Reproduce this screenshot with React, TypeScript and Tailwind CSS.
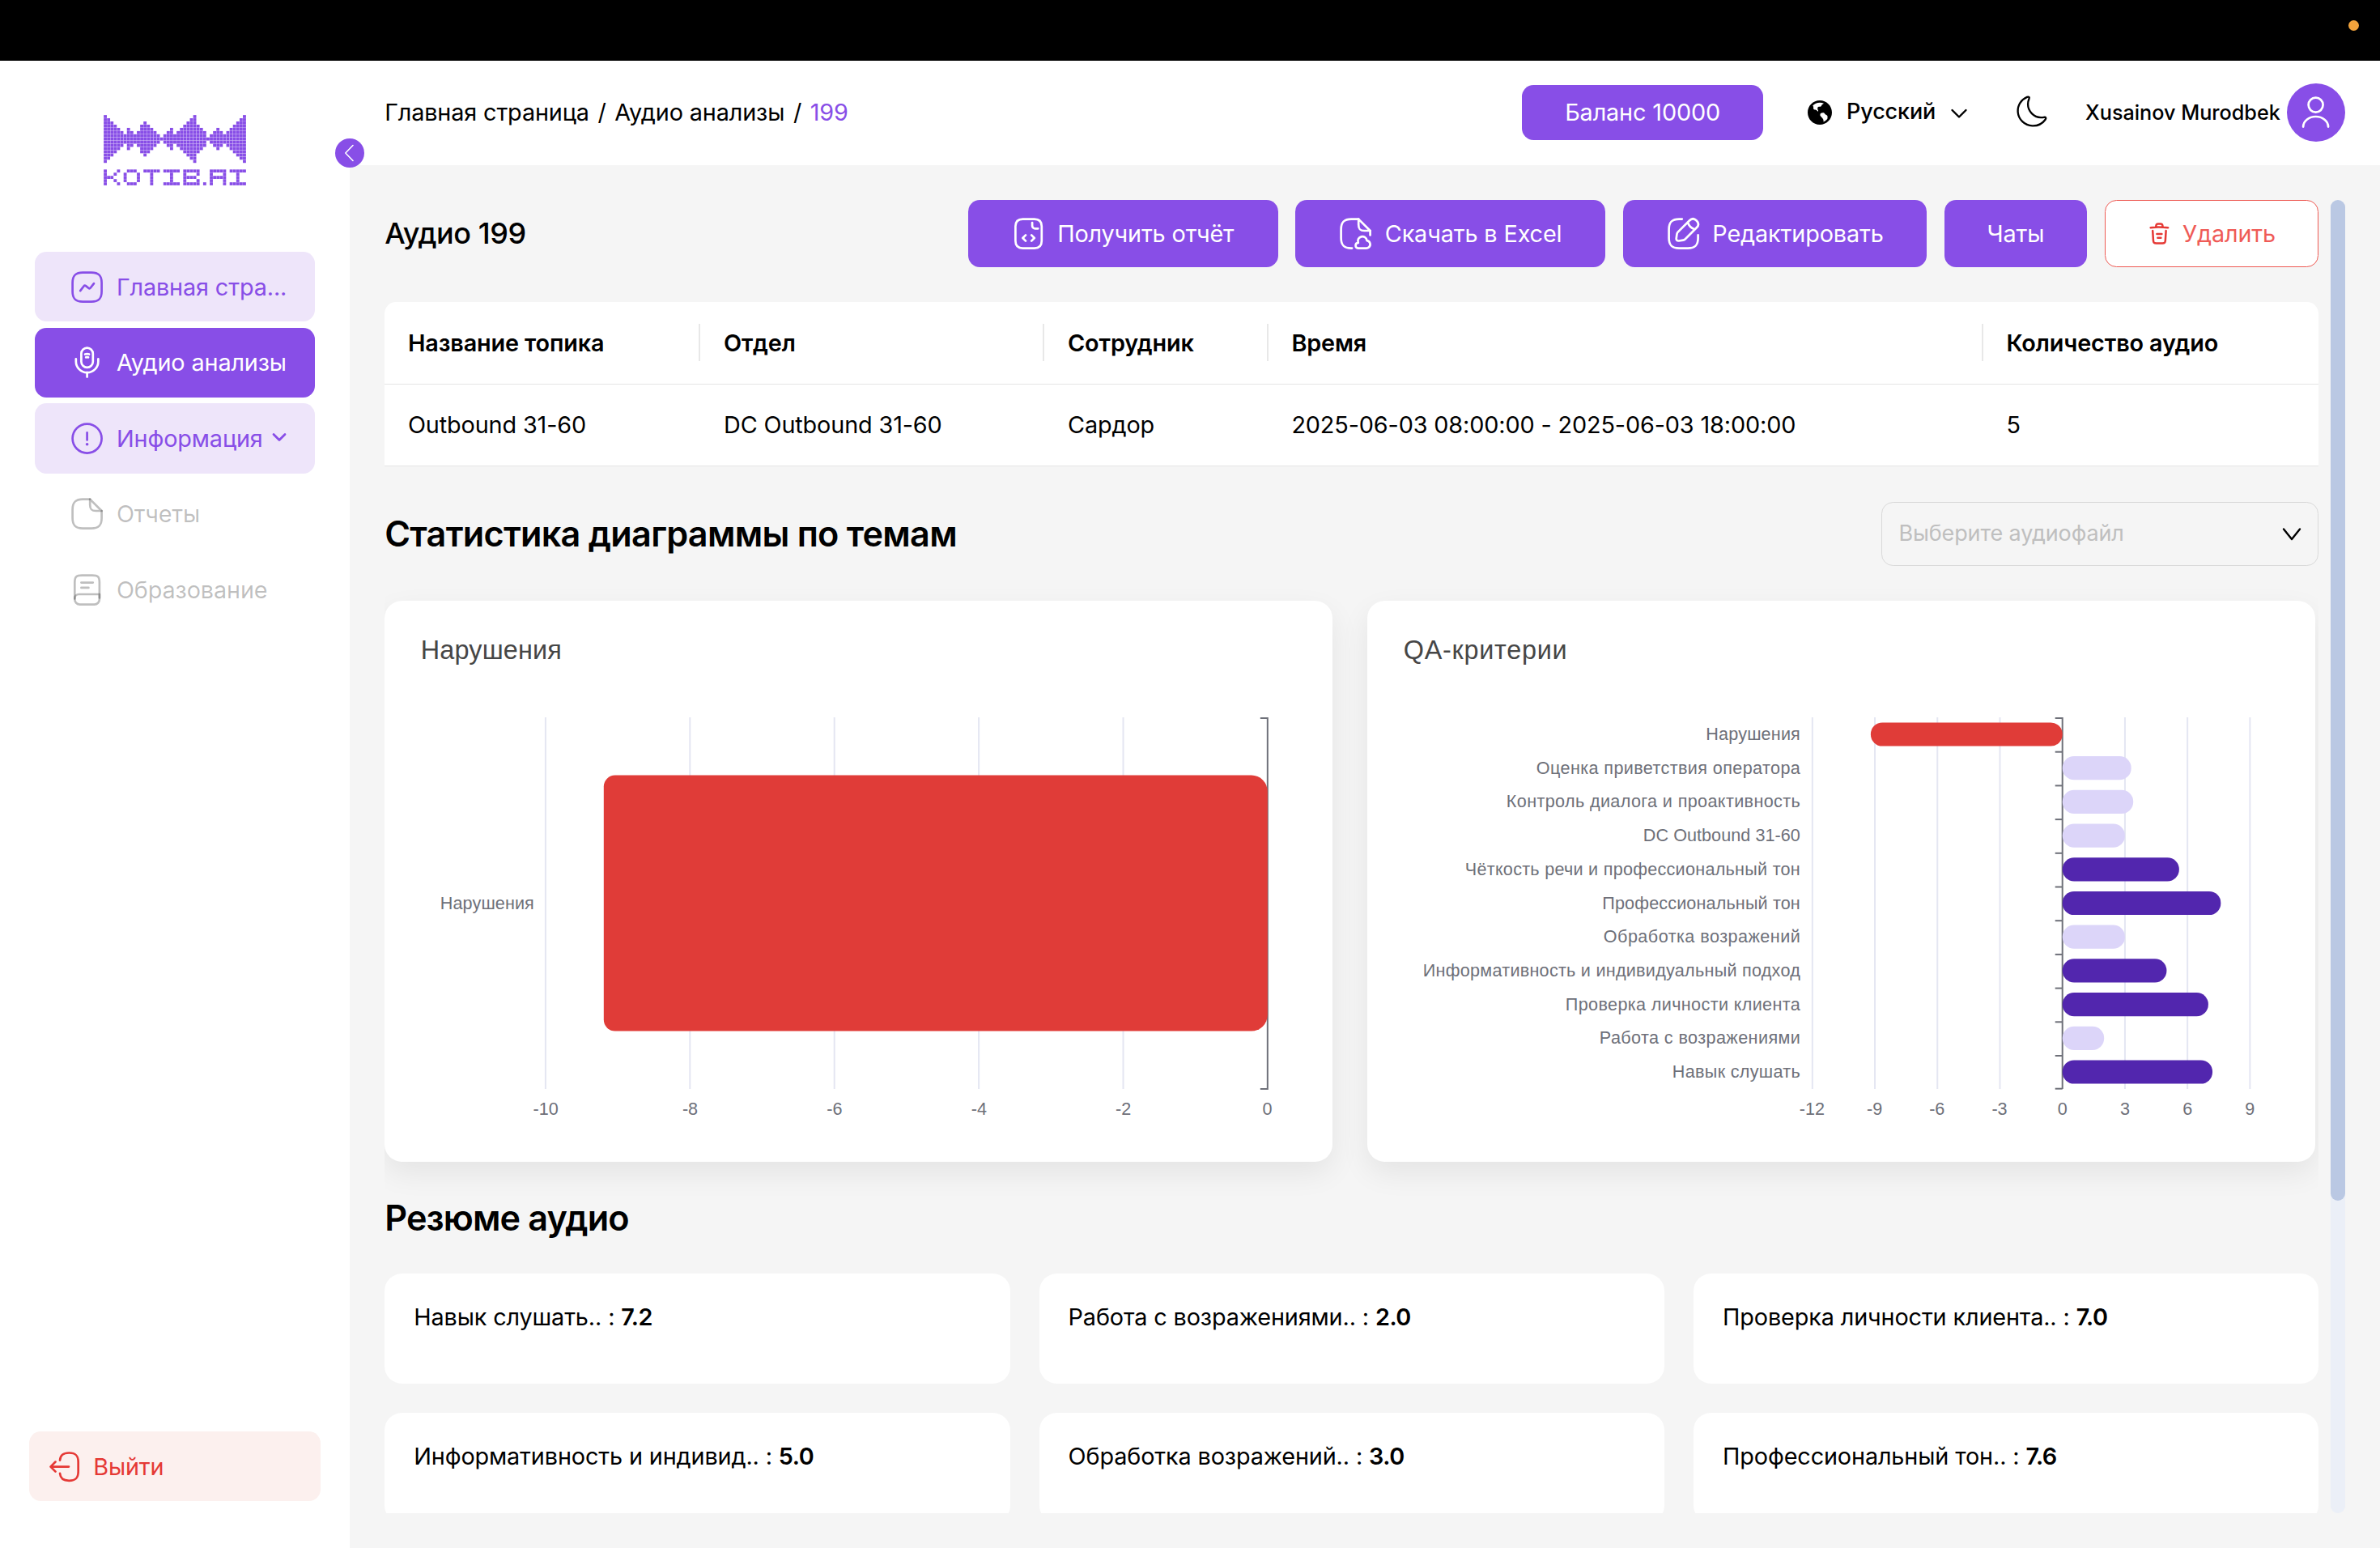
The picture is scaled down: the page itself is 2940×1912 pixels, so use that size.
import React from 'react';
import { RiEarthFill } from 'react-icons/ri';

function Icon({ children, className = 'size-6', width = 1.5 }: { children: React.ReactNode; className?: string; width?: number }) {
  return (
    <svg viewBox="0 0 24 24" fill="none" stroke="currentColor" strokeWidth={width} strokeLinecap="round" strokeLinejoin="round" className={`${className} shrink-0`}>
      {children}
    </svg>
  );
}

const waveHeights = [
  7, 6, 5, 4, 3, 2, 1, 3, 2, 1, 2, 4, 5, 4, 3, 2, 1, 0, 1, 2, 3, 1, 2, 3, 4, 5, 6, 7, 4, 3, 2, 0, 1, 2, 3, 2, 1, 2, 3, 4, 5, 6, 7,
];
const wordmark = [
  'X...X..XXX..XXXXX.XXXXX.XXXXX...XXXXX.XXXXX',
  'X..X..X...X...X.....X...X...X...X...X...X..',
  'XXX...X...X...X.....X...XXXX....XXXXX...X..',
  'X..X..X...X...X.....X...X...X...X...X...X..',
  'X...X..XXX....X...XXXXX.XXXXX.X.X...X.XXXXX',
];

function Logo() {
  const cells: [number, number][] = [];
  waveHeights.forEach((h, x) => {
    for (let y = 7 - h; y <= 7 + h; y++) cells.push([x, y]);
  });
  wordmark.forEach((row, y) => {
    row.split('').forEach((c, x) => {
      if (c === 'X') cells.push([x, y + 17]);
    });
  });
  return (
    <svg viewBox="0 0 43 22" preserveAspectRatio="none" className="h-[87px] w-[176px]" fill="#884ee7">
      {cells.map(([x, y]) => (
        <rect key={`${x}-${y}`} x={x + 0.03} y={y + 0.03} width={0.94} height={0.94} />
      ))}
    </svg>
  );
}

const nav = [
  {
    label: 'Главная стра...',
    style: 'bg-[#eee5fa] text-[#884ee7]',
    icon: (
      <>
        <path d="M9 22h6c5 0 7-2 7-7V9c0-5-2-7-7-7H9C4 2 2 4 2 9v6c0 5 2 7 7 7Z" />
        <path d="m7.33 14.49 2.38-3.09c.34-.44.97-.52 1.41-.18l1.83 1.44c.44.34 1.07.26 1.41-.17l2.31-2.98" />
      </>
    ),
  },
  {
    label: 'Аудио анализы',
    style: 'bg-[#884ee7] text-white',
    icon: (
      <>
        <path d="M12 15.5c2.21 0 4-1.79 4-4V6c0-2.21-1.79-4-4-4S8 3.79 8 6v5.5c0 2.21 1.79 4 4 4Z" />
        <path d="M4.35 9.65v1.7C4.35 15.57 7.78 19 12 19s7.65-3.43 7.65-7.65v-1.7" />
        <path d="M10.61 6.43a4.1 4.1 0 0 1 2.78 0M11.2 8.55c.53-.15 1.08-.15 1.61 0M12 19v3" />
      </>
    ),
  },
  {
    label: 'Информация',
    style: 'bg-[#eee5fa] text-[#884ee7]',
    chevron: true,
    icon: (
      <>
        <path d="M12 22c5.5 0 10-4.5 10-10S17.5 2 12 2 2 6.5 2 12s4.5 10 10 10Z" />
        <path d="M12 8v5" />
        <path d="M11.995 16h.009" strokeWidth={2} />
      </>
    ),
  },
  {
    label: 'Отчеты',
    style: 'text-black/25',
    icon: (
      <>
        <path d="M22 10v5c0 5-2 7-7 7H9c-5 0-7-2-7-7V9c0-5 2-7 7-7h5" />
        <path d="M22 10h-4c-3 0-4-1-4-4V2l8 8Z" />
      </>
    ),
  },
  {
    label: 'Образование',
    style: 'text-black/25',
    icon: (
      <>
        <path d="M3.5 18V7c0-4 1-5 5-5h7c4 0 5 1 5 5v10c0 .14 0 .28-.01.42" />
        <path d="M6.35 15H20.5v3.5c0 1.93-1.57 3.5-3.5 3.5H7c-1.93 0-3.5-1.57-3.5-3.5v-.65C3.5 16.28 4.78 15 6.35 15Z" />
        <path d="M8 7h8M8 10.5h5" />
      </>
    ),
  },
];

function Sidebar() {
  return (
    <aside className="relative flex w-60 shrink-0 flex-col bg-white">
      <div className="flex h-[236.1px] justify-center pt-[67px]">
        <Logo />
      </div>
      <nav className="flex flex-col gap-1 px-6">
        {nav.map((item) => (
          <div key={item.label} className={`flex h-12 items-center gap-2 rounded-lg pl-6 ${item.style}`}>
            <Icon>{item.icon}</Icon>
            <span className="whitespace-nowrap">{item.label}</span>
            {item.chevron && (
              <Icon className="-ml-[6px] size-[24px]" width={2.8}>
                <path d="m5 7.5 7 7 7-7" />
              </Icon>
            )}
          </div>
        ))}
      </nav>
      <div className="mx-5 mt-auto mb-[57.6px] flex h-12 items-center gap-2 rounded-lg bg-[#fcf0ee] pl-3 text-[#e53935]">
        <Icon>
          <path d="M8.9 7.56c.31-3.6 2.16-5.07 6.21-5.07h.13c4.47 0 6.26 1.79 6.26 6.27v6.52c0 4.48-1.79 6.27-6.26 6.27h-.13c-4.02 0-5.87-1.45-6.2-4.99" />
          <path d="M15 12H3.62M5.85 8.65 2.5 12l3.35 3.35" />
        </Icon>
        <span>Выйти</span>
      </div>
      <div className="absolute top-[96px] -right-[18px] z-10 flex size-5 items-center justify-center rounded-full bg-[#884ee7] text-white">
        <Icon className="size-[24px]" width={1.6}>
          <path d="M16 2.5 6.8 12l9.2 9.5" />
        </Icon>
      </div>
    </aside>
  );
}

function Header() {
  return (
    <header className="flex h-[129px] items-center bg-white px-6 pb-[1px]">
      <div className="flex gap-[10.6px]">
        <span>Главная страница</span>
        <span>/</span>
        <span>Аудио анализы</span>
        <span>/</span>
        <span className="text-[#884ee7]">199</span>
      </div>
      <div className="ml-auto flex h-[68px] w-[298px] items-center justify-center rounded-lg bg-[#884ee7] text-white">Баланс 10000</div>
      <div className="ml-[52px] flex items-center pb-[1px]">
        <RiEarthFill className="size-[36px]" />
        <span className="ml-[15px] w-[111px] text-[27px] font-medium">Русский</span>
        <Icon className="mt-[2px] ml-[16px] size-[24px]" width={2.4}>
          <path d="m3.5 8 8.5 8.5L20.5 8" />
        </Icon>
      </div>
      <Icon className="mb-[3px] ml-[57px] size-[43px]" width={1.3}>
        <path d="M2.03 12.42c.36 5.15 4.73 9.34 9.96 9.57 3.69.16 6.99-1.56 8.97-4.27.82-1.11.38-1.85-.99-1.6-.67.12-1.36.17-2.08.14C13 16.06 9 11.97 8.98 7.14c-.01-1.3.26-2.53.75-3.65.54-1.24-.11-1.83-1.36-1.3C4.41 3.86 1.7 7.85 2.03 12.42Z" />
      </Icon>
      <span className="ml-[44px] text-sm font-medium tracking-normal">Xusainov Murodbek</span>
      <div className="ml-[8px] flex size-10 items-center justify-center rounded-full bg-[#884ee7] text-white">
        <Icon>
          <path d="M12 12c2.76 0 5-2.24 5-5s-2.24-5-5-5-5 2.24-5 5 2.24 5 5 5ZM20.59 22c0-3.87-3.85-7-8.59-7s-8.59 3.13-8.59 7" />
        </Icon>
      </div>
    </header>
  );
}

function Toolbar() {
  return (
    <div className="flex items-center gap-3">
      <h1 className="mr-auto text-xl font-medium tracking-[-0.45px]">Аудио 199</h1>
      <div className="flex h-[82.8px] w-[383px] items-center gap-2 rounded-lg bg-[#884ee7] pl-[53px] text-white">
        <Icon>
          <path d="M21 7v10c0 3-1.5 5-5 5H8c-3.5 0-5-2-5-5V7c0-3 1.5-5 5-5h8c3.5 0 5 2 5 5Z" />
          <path d="M14.5 4.5v2c0 1.1.9 2 2 2h2M10 13l-2 2 2 2M14 13l2 2-2 2" />
        </Icon>
        <span>Получить отчёт</span>
      </div>
      <div className="flex h-[82.8px] w-[383px] items-center gap-2 rounded-lg bg-[#884ee7] pl-[53px] text-white">
        <Icon>
          <path d="M9.5 22H9c-5 0-7-2-7-7V9c0-5 2-7 7-7h5M22 10v3" />
          <path d="M22 10h-4c-3 0-4-1-4-4V2l8 8Z" />
          <path d="M13.76 18.28c-2.35.17-2.35 3.57 0 3.74h5.56c.67 0 1.33-.25 1.82-.7 1.65-1.44.77-4.32-1.4-4.59-.78-4.69-7.56-2.91-5.95 1.56" />
        </Icon>
        <span>Скачать в Excel</span>
      </div>
      <div className="flex h-[82.8px] w-[375.3px] items-center gap-2 rounded-lg bg-[#884ee7] pl-[53px] text-white">
        <Icon>
          <path d="M11 2H9C4 2 2 4 2 9v6c0 5 2 7 7 7h6c5 0 7-2 7-7v-2" />
          <path d="M16.04 3.02 8.16 10.9c-.3.3-.6.89-.66 1.32l-.43 3.01c-.16 1.09.61 1.85 1.7 1.7l3.01-.43c.42-.06 1.01-.36 1.32-.66l7.88-7.88c1.36-1.36 2-2.94 0-4.94-2-2-3.58-1.36-4.94 0ZM14.91 4.15a7.144 7.144 0 0 0 4.94 4.94" />
        </Icon>
        <span>Редактировать</span>
      </div>
      <div className="flex h-[82.8px] w-[176.6px] items-center justify-center rounded-lg bg-[#884ee7] text-white">Чаты</div>
      <div className="flex h-[82.8px] w-[264.6px] items-center gap-2 rounded-lg border border-[#ee5a53] bg-white pl-[52px] text-[#ef5b57]">
        <Icon className="size-4 text-[#e53935]" width={2.1}>
          <path d="M21 5.98c-3.33-.33-6.68-.5-10.02-.5-1.98 0-3.96.1-5.94.3L3 5.98M8.5 4.97l.22-1.31C8.88 2.71 9 2 10.69 2h2.62c1.69 0 1.82.75 1.97 1.67l.22 1.3M18.85 9.14l-.65 10.07C18.09 20.78 18 22 15.21 22H8.79C6 22 5.91 20.78 5.8 19.21L5.15 9.14M10.33 16.5h3.33M9.5 12.5h5" />
        </Icon>
        <span>Удалить</span>
      </div>
    </div>
  );
}

const columns = [
  { title: 'Название топика', value: 'Outbound 31-60' },
  { title: 'Отдел', value: 'DC Outbound 31-60' },
  { title: 'Сотрудник', value: 'Сардор' },
  { title: 'Время', value: '2025-06-03 08:00:00 - 2025-06-03 18:00:00' },
  { title: 'Количество аудио', value: '5' },
];

function TopicTable() {
  return (
    <div className="mt-6 overflow-hidden rounded-t-lg bg-white">
      <div className="grid h-[101.4px] grid-cols-[390px_425px_276.4px_883px_1fr] items-center border-b border-[#e5e5e5] font-semibold">
        {columns.map((c, i) => (
          <div key={c.title} className={`flex h-[46px] items-center pl-4 ${i < 4 ? 'border-r-2 border-[#e8e8e8]' : ''}`}>
            {c.title}
          </div>
        ))}
      </div>
      <div className="grid h-[101.4px] grid-cols-[390px_425px_276.4px_883px_1fr] items-center border-b border-[#e5e5e5]">
        {columns.map((c) => (
          <div key={c.title} className="pl-4">
            {c.value}
          </div>
        ))}
      </div>
    </div>
  );
}

const chartFont = "'Liberation Sans', Arial, sans-serif";

function ViolationsChart() {
  const x0 = 1565.6;
  const step = 178.4;
  return (
    <svg viewBox="475.2 742 1171 693" className="h-[693px] w-full tracking-normal" fontFamily={chartFont}>
      <text x={520} y={814} fontSize={32.4} fill="#464646" textLength={174}>
        Нарушения
      </text>
      {[-10, -8, -6, -4, -2].map((v) => (
        <rect key={v} x={x0 + (v / 2) * step - 0.5} y={886} width={2} height={459} fill="#e4e6f2" />
      ))}
      <path d="M1557 887h9v458h-9" fill="none" stroke="#6e7079" strokeWidth={2} />
      <path d="M760 957.6H1546a20 20 0 0 1 20 20V1253.6a20 20 0 0 1-20 20H760a14 14 0 0 1-14-14V971.6a14 14 0 0 1 14-14Z" fill="#e03c38" />
      <text x={660} y={1122.5} fontSize={21.6} fill="#6e7079" textAnchor="end" textLength={116}>
        Нарушения
      </text>
      {[-10, -8, -6, -4, -2, 0].map((v) => (
        <text key={v} x={x0 + (v / 2) * step + (v < 0 ? 0.7 : 0)} y={1377.4} fontSize={21.6} fill="#6e7079" textAnchor="middle">
          {v}
        </text>
      ))}
    </svg>
  );
}

const red = '#e03c38';
const lilac = '#dcd5f9';
const violet = '#5226ae';

const criteria = [
  { label: 'Нарушения', value: -9.2, color: red, width: 116.5 },
  { label: 'Оценка приветствия оператора', value: 3.3, color: lilac, width: 326 },
  { label: 'Контроль диалога и проактивность', value: 3.4, color: lilac, width: 363 },
  { label: 'DC Outbound 31-60', value: 3, color: lilac, width: 194 },
  { label: 'Чёткость речи и профессиональный тон', value: 5.6, color: violet, width: 414 },
  { label: 'Профессиональный тон', value: 7.6, color: violet, width: 244.5 },
  { label: 'Обработка возражений', value: 3, color: lilac, width: 243 },
  { label: 'Информативность и индивидуальный подход', value: 5, color: violet, width: 466 },
  { label: 'Проверка личности клиента', value: 7, color: violet, width: 290 },
  { label: 'Работа с возражениями', value: 2, color: lilac, width: 248 },
  { label: 'Навык слушать', value: 7.2, color: violet, width: 158 },
];

function CriteriaChart() {
  const x0 = 2547.5;
  const unit = 25.74;
  const band = 41.7;
  return (
    <svg viewBox="1688.8 742 1171 693" className="h-[693px] w-full tracking-normal" fontFamily={chartFont}>
      <text x={1733.5} y={814} fontSize={32.4} fill="#464646" textLength={202}>
        QA-критерии
      </text>
      {[-12, -9, -6, -3, 3, 6, 9].map((v) => (
        <rect key={v} x={x0 + v * unit - 1} y={886} width={2} height={459} fill="#e4e6f2" />
      ))}
      <rect x={x0 - 1} y={886} width={2} height={459} fill="#6e7079" />
      {Array.from({ length: 12 }, (_, i) => (
        <rect key={i} x={x0 - 9} y={886 + i * band - (i === 11 ? 1 : 0)} width={9} height={2} fill="#6e7079" />
      ))}
      {criteria.map(({ label, value, color, width }, i) => (
        <g key={label}>
          <rect x={value < 0 ? x0 + value * unit : x0} y={886 + i * band + 6.4} width={Math.abs(value) * unit} height={29.2} rx={14.4} fill={color} />
          <text x={2223.6} y={886 + (i + 0.5) * band + 7.2} fontSize={21.6} fill="#6e7079" textAnchor="end" textLength={width}>
            {label}
          </text>
        </g>
      ))}
      {[-12, -9, -6, -3, 0, 3, 6, 9].map((v) => (
        <text key={v} x={x0 + v * unit - (v < 0 ? 0.5 : 0)} y={1377.4} fontSize={21.6} fill="#6e7079" textAnchor="middle">
          {v}
        </text>
      ))}
    </svg>
  );
}

const summary = [
  ['Навык слушать..', '7.2'],
  ['Работа с возражениями..', '2.0'],
  ['Проверка личности клиента..', '7.0'],
  ['Информативность и индивид..', '5.0'],
  ['Обработка возражений..', '3.0'],
  ['Профессиональный тон..', '7.6'],
];

export default function App() {
  return (
    <div className="flex h-[1912px] w-[2940px] flex-col overflow-hidden bg-[#f5f5f5] font-['Inter',sans-serif] text-base tracking-[-0.13px] text-black">
      <style>{'html { font-size: 28.8px; }'}</style>
      <div className="flex h-[75px] shrink-0 justify-end bg-black pt-[25px] pr-[26px]">
        <div className="size-[13px] rounded-full bg-[#f2a33c]" />
      </div>
      <div className="flex min-h-0 flex-1">
        <Sidebar />
        <div className="flex min-w-0 flex-1 flex-col">
          <Header />
          <main className="flex min-h-0 flex-1 gap-2 p-6">
            <div className="min-w-0 flex-1 overflow-hidden">
              <Toolbar />
              <TopicTable />
              <div className="mt-[44.4px] flex items-center justify-between">
                <h2 className="text-2xl font-semibold tracking-[-0.72px]">Статистика диаграммы по темам</h2>
                <div className="flex h-[78.6px] w-75 items-center justify-between rounded-lg border border-[#d9d9d9] px-[20px] text-[27px] text-[#bfbfbf]">
                  <span>Выберите аудиофайл</span>
                  <Icon className="size-[24px] text-black" width={2.4}>
                    <path d="m2 5.5 10 12.5L22 5.5" />
                  </Icon>
                </div>
              </div>
              <div className="mt-[42.6px] grid grid-cols-2 gap-[42.6px] pr-[4.6px]">
                <div className="rounded-xl bg-white shadow-[0_14px_36px_rgba(0,0,0,0.07)]">
                  <ViolationsChart />
                </div>
                <div className="rounded-xl bg-white shadow-[0_14px_36px_rgba(0,0,0,0.07)]">
                  <CriteriaChart />
                </div>
              </div>
              <h2 className="flex h-[138px] items-center pt-[2px] text-2xl font-semibold tracking-[-0.85px]">Резюме аудио</h2>
              <div className="grid grid-cols-3 gap-5">
                {summary.map(([name, score]) => (
                  <div key={name} className="h-[136px] rounded-xl bg-white px-5 pt-[32px]">
                    {name} : <span className="font-semibold tracking-[-0.5px]">{score}</span>
                  </div>
                ))}
              </div>
            </div>
            <div className="w-[18px] rounded-full bg-[#ebeff7]">
              <div className="h-[1236px] rounded-full bg-[#bac8e3]" />
            </div>
          </main>
        </div>
      </div>
    </div>
  );
}
